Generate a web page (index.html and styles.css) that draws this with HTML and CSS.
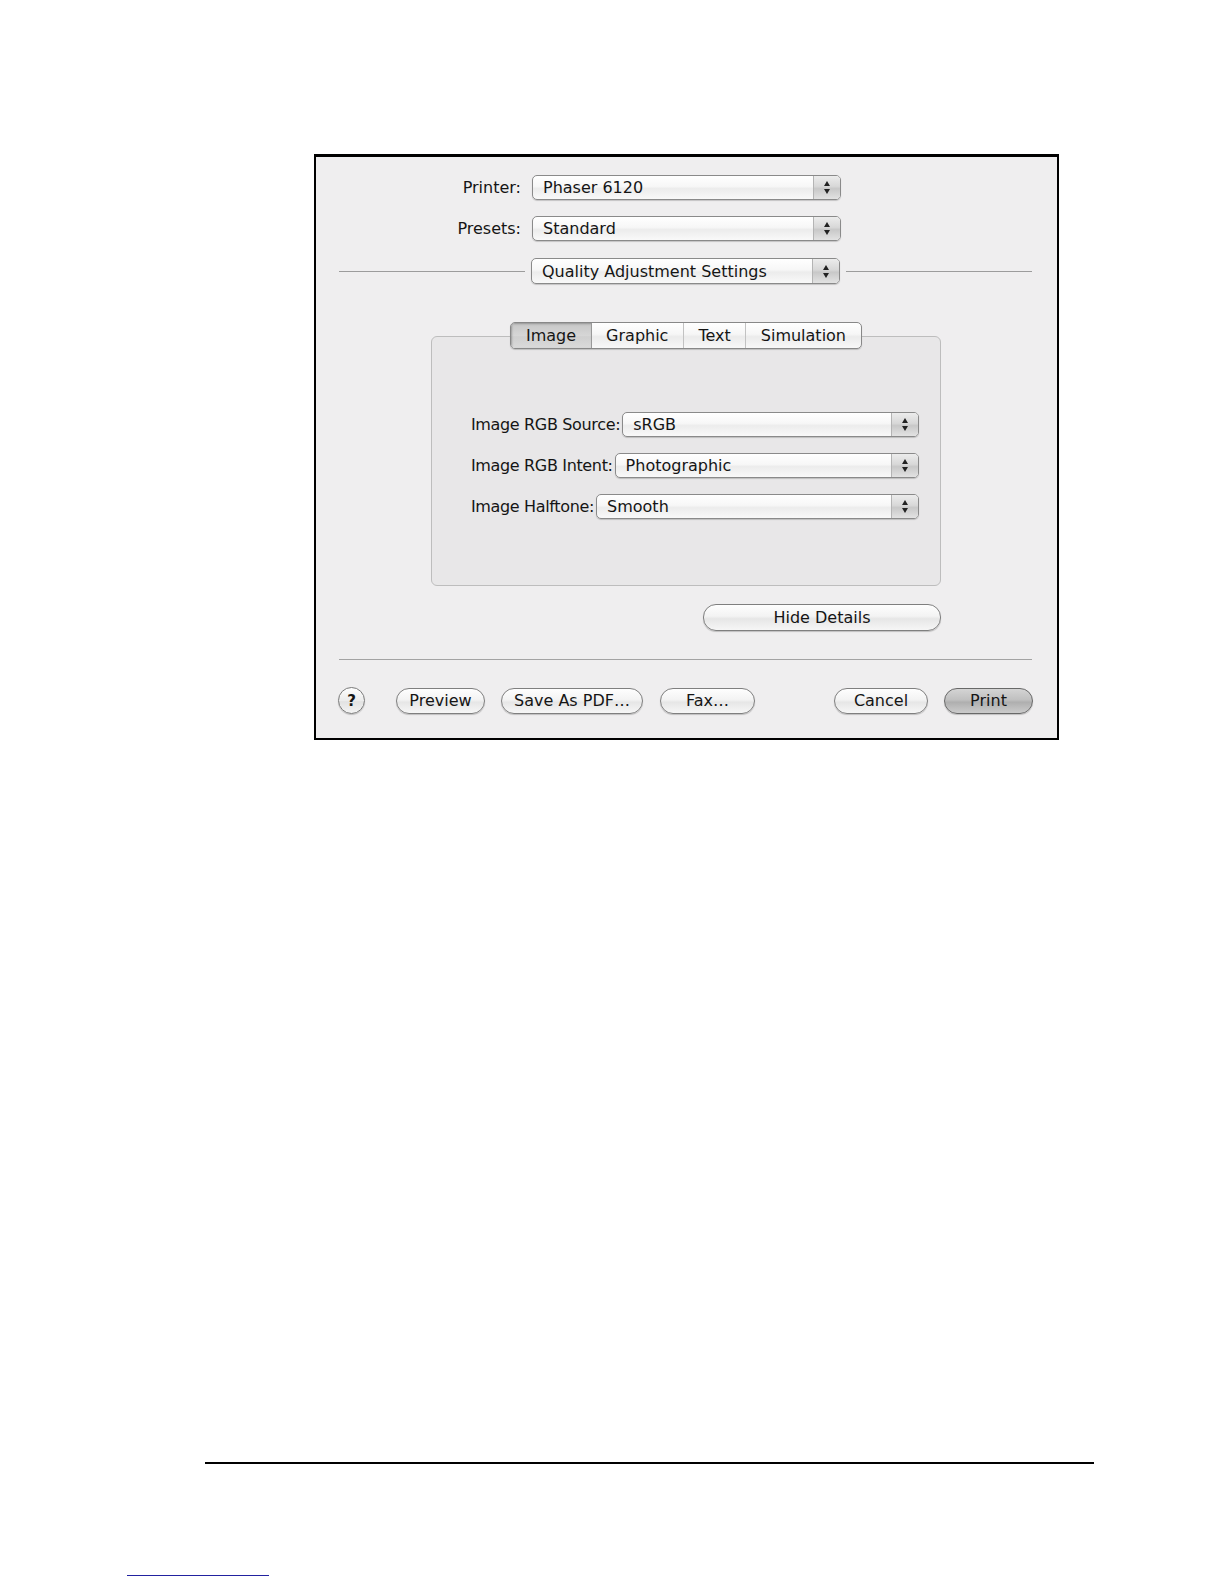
FILE: index.html
```html
<!DOCTYPE html>
<html>
<head>
<meta charset="utf-8">
<link rel="stylesheet" href="styles.css">
</head>
<body>
<div class="page">
  <div class="dialog">
    <div class="top-rows">
      <div class="field-row">
        <span class="field-label">Printer:</span>
        <div class="popup"><span class="popup-text">Phaser 6120</span><span class="popup-arrows"><i class="up"></i><i class="down"></i></span></div>
      </div>
      <div class="field-row">
        <span class="field-label">Presets:</span>
        <div class="popup"><span class="popup-text">Standard</span><span class="popup-arrows"><i class="up"></i><i class="down"></i></span></div>
      </div>
    </div>
    <div class="pane-row">
      <div class="rule"></div>
      <div class="popup pane-popup"><span class="popup-text">Quality Adjustment Settings</span><span class="popup-arrows"><i class="up"></i><i class="down"></i></span></div>
      <div class="rule"></div>
    </div>
    <div class="tabbox">
      <div class="tabs">
        <span class="tab selected">Image</span>
        <span class="tab">Graphic</span>
        <span class="tab">Text</span>
        <span class="tab">Simulation</span>
      </div>
      <div class="tab-content">
        <div class="opt-row">
          <span class="opt-label">Image RGB Source:</span>
          <div class="popup grow"><span class="popup-text">sRGB</span><span class="popup-arrows"><i class="up"></i><i class="down"></i></span></div>
        </div>
        <div class="opt-row">
          <span class="opt-label">Image RGB Intent:</span>
          <div class="popup grow"><span class="popup-text">Photographic</span><span class="popup-arrows"><i class="up"></i><i class="down"></i></span></div>
        </div>
        <div class="opt-row">
          <span class="opt-label">Image Halftone:</span>
          <div class="popup grow"><span class="popup-text">Smooth</span><span class="popup-arrows"><i class="up"></i><i class="down"></i></span></div>
        </div>
      </div>
    </div>
    <div class="details-row">
      <span class="btn hide-details">Hide Details</span>
    </div>
    <div class="sep"></div>
    <div class="button-row">
      <span class="help">?</span>
      <span class="btn w-preview">Preview</span>
      <span class="btn w-pdf">Save As PDF…</span>
      <span class="btn w-fax">Fax…</span>
      <span class="spacer"></span>
      <span class="btn w-cancel">Cancel</span>
      <span class="btn default w-print">Print</span>
    </div>
  </div>
  <div class="footer-rule"></div>
  <div class="link-line"></div>
</div>
</body>
</html>
```
FILE: styles.css
```css
html, body {
  margin: 0;
  padding: 0;
  background: #ffffff;
}

.page {
  padding-top: 154px;
  font-family: "DejaVu Sans", "Liberation Sans", sans-serif;
  font-size: 16px;
  color: #151515;
}

.dialog {
  margin-left: 314px;
  width: 745px;
  height: 586px;
  box-sizing: border-box;
  border: 2px solid #000;
  border-top-width: 3px;
  background: #efeeef;
}

.top-rows {
  padding-top: 18px;
  display: flex;
  flex-direction: column;
  gap: 16px;
}

.field-row {
  display: grid;
  grid-template-columns: 205px 309px;
  column-gap: 11px;
  align-items: center;
}

.field-label {
  text-align: right;
}

.popup {
  height: 25px;
  box-sizing: border-box;
  border: 1px solid #8a8a8a;
  border-radius: 5px;
  background: linear-gradient(#ffffff, #f7f7f7 45%, #ececec 55%, #f9f9f9);
  box-shadow: 0 1px 1px rgba(0, 0, 0, 0.18);
  display: flex;
  align-items: center;
  overflow: hidden;
}

.popup-text {
  flex: 1;
  padding-left: 10px;
  white-space: nowrap;
  line-height: 23px;
}

.popup-arrows {
  width: 26px;
  align-self: stretch;
  border-left: 1px solid #b4b4b4;
  background: linear-gradient(#ececec, #d8d8d8 45%, #c8c8c8 55%, #e2e2e2);
  display: flex;
  flex-direction: column;
  align-items: center;
  justify-content: center;
  gap: 3px;
}

.up, .down {
  display: block;
  width: 0;
  height: 0;
  border-left: 3.5px solid transparent;
  border-right: 3.5px solid transparent;
}

.up {
  border-bottom: 5px solid #222;
}

.down {
  border-top: 5px solid #222;
}

.pane-row {
  margin-top: 17px;
  padding: 0 25px 0 23px;
  display: flex;
  align-items: center;
  gap: 6px;
}

.rule {
  flex: 1;
  height: 1px;
  background: #9c9c9c;
}

.pane-popup {
  width: 309px;
  height: 26px;
}

.tabbox {
  margin: 38px 116px 0 115px;
}

.tabs {
  position: relative;
  z-index: 1;
  width: max-content;
  margin: 0 auto -13px;
  display: flex;
  height: 27px;
  box-sizing: border-box;
  border: 1px solid #888;
  border-radius: 5px;
  overflow: hidden;
  background: linear-gradient(#ffffff, #f6f6f6 45%, #ebebeb 55%, #f8f8f8);
  box-shadow: 0 1px 1px rgba(0, 0, 0, 0.18);
}

.tab {
  padding: 0 14.5px;
  line-height: 25px;
  border-left: 1px solid #c2c2c2;
}

.tab:first-child {
  border-left: none;
}

.tab.selected {
  background: linear-gradient(#c6c6c6, #d6d6d6 50%, #cfcfcf 55%, #dadada);
  box-shadow: inset 1px 1px 2px rgba(0, 0, 0, 0.25);
  border-right: 1px solid #999;
}

.tab.selected + .tab {
  border-left: none;
}

.tab-content {
  height: 250px;
  box-sizing: border-box;
  border: 1px solid #bdbdbd;
  border-radius: 6px;
  background: #e8e7e8;
  padding: 75px 21px 0 39px;
  display: flex;
  flex-direction: column;
  gap: 16px;
}

.opt-row {
  display: flex;
  align-items: center;
  gap: 2px;
}

.opt-label {
  white-space: nowrap;
  letter-spacing: -0.35px;
}

.grow {
  flex: 1;
}

.details-row {
  margin: 18px 116px 0 0;
  display: flex;
  justify-content: flex-end;
}

.btn {
  height: 26px;
  box-sizing: border-box;
  border: 1px solid #7f7f7f;
  border-radius: 13px;
  background: linear-gradient(#fefefe, #f3f3f3 45%, #e6e6e6 55%, #f6f6f6);
  box-shadow: 0 1px 1px rgba(0, 0, 0, 0.2);
  display: flex;
  align-items: center;
  justify-content: center;
  white-space: nowrap;
}

.hide-details {
  width: 238px;
  height: 27px;
}

.sep {
  margin: 28px 25px 0 23px;
  height: 1px;
  background: #a3a3a3;
}

.button-row {
  margin-top: 27px;
  padding: 0 24px 0 22px;
  display: flex;
  align-items: center;
}

.help {
  width: 27px;
  height: 27px;
  box-sizing: border-box;
  border: 1px solid #7a7a7a;
  border-radius: 50%;
  background: linear-gradient(#fefefe, #ececec 50%, #e2e2e2 55%, #f4f4f4);
  box-shadow: 0 1px 1px rgba(0, 0, 0, 0.2);
  display: flex;
  align-items: center;
  justify-content: center;
  font-weight: bold;
  font-size: 15px;
}

.w-preview {
  width: 89px;
  margin-left: 31px;
}

.w-pdf {
  width: 142px;
  margin-left: 16px;
}

.w-fax {
  width: 95px;
  margin-left: 17px;
}

.spacer {
  flex: 1;
}

.w-cancel {
  width: 94px;
}

.w-print {
  width: 89px;
  margin-left: 16px;
}

.btn.default {
  border-color: #686868;
  background: linear-gradient(#d4d4d4, #c0c0c0 45%, #afafaf 55%, #cbcbcb);
}

.footer-rule {
  margin: 722px 0 0 205px;
  width: 889px;
  height: 2px;
  background: #000;
}

.link-line {
  margin: 111px 0 0 127px;
  width: 142px;
  height: 1px;
  background: #2222a0;
}
```
